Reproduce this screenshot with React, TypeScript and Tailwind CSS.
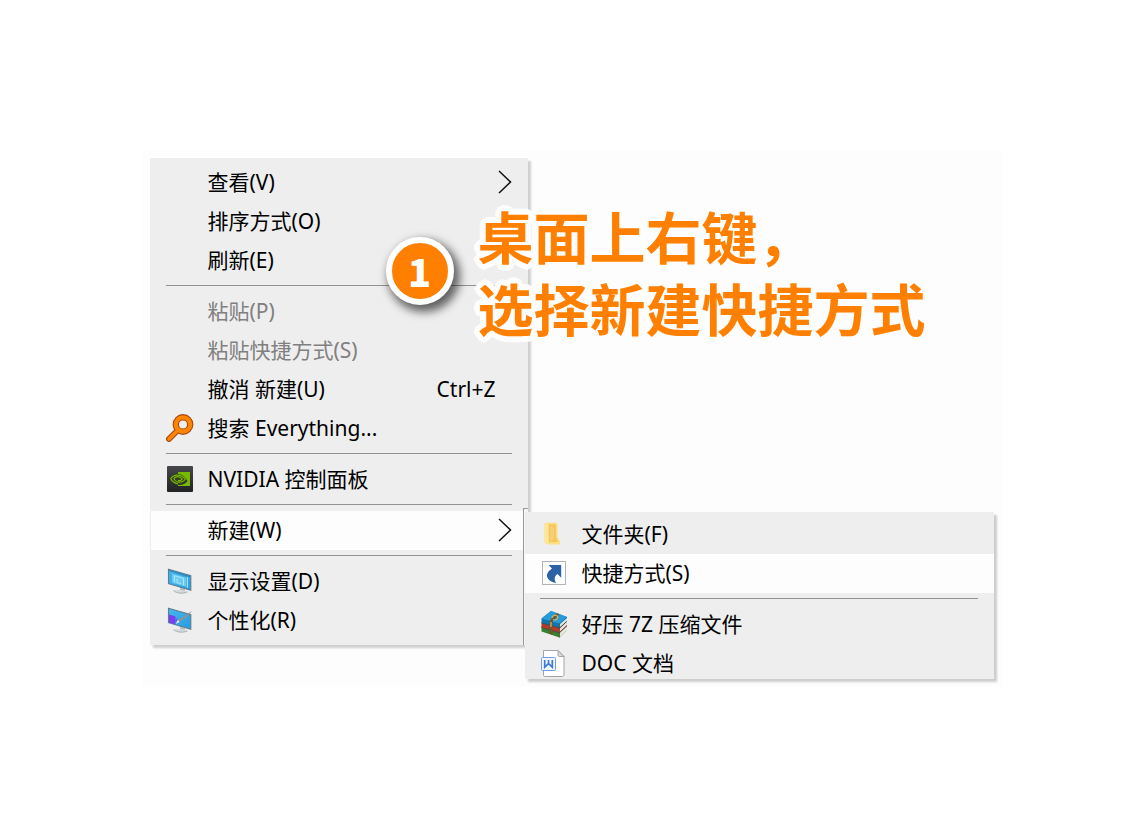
import type { ReactNode } from "react";

function SearchIcon() {
  return (
    <svg viewBox="0 0 28 28" className="size-7" aria-hidden="true">
      <path d="M11.5 16.5 3 25" stroke="#a8480c" strokeWidth="6" strokeLinecap="round" />
      <circle cx="17" cy="10.5" r="7.2" fill="none" stroke="#a8480c" strokeWidth="6.4" />
      <path d="M12.5 15.5 3 25" stroke="#ff8400" strokeWidth="3.6" strokeLinecap="round" />
      <circle cx="17" cy="10.5" r="7.2" fill="none" stroke="#ff8400" strokeWidth="4.2" />
    </svg>
  );
}

function NvidiaIcon() {
  return (
    <svg viewBox="0 0 28 28" className="size-7" aria-hidden="true">
      <defs>
        <linearGradient id="nvBase" x1="0" y1="0" x2="0" y2="1">
          <stop offset="0" stopColor="#45474a" />
          <stop offset="1" stopColor="#202224" />
        </linearGradient>
      </defs>
      <rect x="1" y="1" width="26" height="26" rx="1" fill="url(#nvBase)" />
      <path d="M12 7h12v14H12z" fill="#77b900" />
      <path d="M12 9C8 9 5 11 3.600 13.500 5 17 8 19.500 12 20c5 .5 8-2 9.500-4C19 12 16 9 12 9Z" fill="#333b22" />
      <path d="M12 10.200C8.500 10 6 11.800 4.800 13.500 6 16.500 8.500 18.300 12 18.800M12 10.200c3.500 0 6 2.500 7.300 4.300-2 2.500-4.500 3-7.300 2.500-2.300-.5-3.600-1.700-4.200-3.400 1-1.200 2.500-2 4.200-2 2 0 3.500 1.400 4.300 2.600-1.100 1.200-2.500 1.700-4.300 1.200" fill="none" stroke="#77b900" strokeWidth="1.200" />
    </svg>
  );
}

function Monitor({ pen = false }: { pen?: boolean }) {
  return (
    <svg viewBox="0 0 28 28" className="size-7" aria-hidden="true">
      <defs>
        <linearGradient id="screenFill" x1="0" y1="0" x2="1" y2="1">
          <stop offset="0" stopColor="#45b8ee" />
          <stop offset="1" stopColor="#289be0" />
        </linearGradient>
      </defs>
      <path d="m14 20 5 2v3l-5-1z" fill="#b9c0c4" />
      <path d="M7.500 23.500c3-1 11-.3 14 1.200-2 1.600-6 1.900-8.500 1.400Z" fill="#d5dadd" />
      <path d="M7.500 23.700c1.500 1.300 4 2.200 6.500 2.400s5-.1 7.500-1.200" fill="none" stroke="#a3aaaf" strokeWidth=".9" />
      <path d="M2.500 2.200 24.800 8.700v14.600L2.500 16.700Z" fill="url(#screenFill)" stroke="#5f7d8c" strokeWidth="1.100" />
      {pen ? (
        <>
          <path d="M3 8.500 9 10.200v8L3 16.400Z" fill="#7c3cf0" />
          <path d="m9 10.200 3.500 4.300L9 18.200Z" fill="#4b75ee" />
          <path d="m11 14.500 9.500-6L26 5l-4.500 5.200L12 17Z" fill="#8c9499" />
          <path d="m9.500 18 2.500-4 1.500 2Z" fill="#e9eef0" />
        </>
      ) : (
        <>
          <path d="m6 6.500 14.500 4.200v9.300L6 15.700Z" fill="#7bd5f5" opacity=".75" />
          <path d="M3 3.500 24 9.600" stroke="#2e86b8" strokeWidth="1.200" />
          <path d="M21.500 10v10.800M8.500 8.700v6.500M8.500 8.700l9 2.600v7M11 11.500v4l4 1.200" fill="none" stroke="#b2eafb" strokeWidth=".9" />
        </>
      )}
    </svg>
  );
}

function FolderIcon() {
  return (
    <svg viewBox="0 0 28 28" className="size-7" aria-hidden="true">
      <path d="M4.500 3 15 2.500l2.500 1v13.500l3 5-1 2.500H7.500l-3-2Z" fill="#fbdf85" />
      <path d="M8.500 4.500h7.300V17l2 5H8.500Z" fill="#f5c45b" />
      <path d="m10 6 4 1.500v12L10 22Z" fill="#f8cf78" />
      <path d="M4.500 3 8.500 5v19.500l-4-2Z" fill="#fee69a" />
    </svg>
  );
}

function ShortcutIcon() {
  return (
    <svg viewBox="0 0 28 28" className="size-7" aria-hidden="true">
      <rect x="2.500" y="2.500" width="23" height="23" fill="#fff" stroke="#b1b3b5" />
      <path d="M8.500 6h12.700v12.700l-3.700-3.700c-3 2.200-3.600 5-1.400 9C10 22.800 6.700 19.700 7 16c.2-2.500 2.200-4.500 5-6.500Z" fill="#2b62a5" />
    </svg>
  );
}

function ArchiveIcon() {
  return (
    <svg viewBox="0 0 28 28" className="size-7" aria-hidden="true">
      <path d="m1.500 16 6-4 19.500 4v4.500L19.500 27.500 1.500 21.500Z" fill="#37802d" />
      <path d="m19.500 22.500 7.500-7v5l-7.500 7Z" fill="#e5e7df" />
      <path d="m1.500 12.500 6-4 19.500 3v4.500l-7.500 7-18-5.500Z" fill="#b7392f" />
      <path d="m19.500 18.500 7.500-7v3.500l-7.500 7Z" fill="#e7e2d7" />
      <path d="M1.500 8.500 11 1l16 6v4l-7.500 7-18-5Z" fill="#1474ad" />
      <path d="M1.500 8.500 11 1l16 6-7.500 6.500Z" fill="#279bd8" />
      <path d="m19.500 14.500 7.500-6.500v3l-7.500 6.500Z" fill="#dce4e5" />
      <path d="m1.500 13 18 5M1.500 17.500l18 5.300M19.500 13.500v14M19.500 18.200l7.500-7M19.500 22.700l7.500-7" fill="none" stroke="#364c3a" strokeWidth=".7" />
      <path d="m16.500 3 3 1.200-7 7.500v13l-3-1V11Z" fill="#6d552f" />
      <path d="M12 8c0-2.500 4.500-4 5.500-1.500s-3 4.500-4.500 3M11 12v5" fill="none" stroke="#cab36b" strokeWidth="1.300" />
    </svg>
  );
}

function DocIcon() {
  return (
    <svg viewBox="0 0 28 28" className="size-7" aria-hidden="true">
      <path d="M3.500 1.500H18l6 6V26c0 .8-.6 1.500-1.500 1.500H5c-.9 0-1.500-.5-1.500-1.500Z" fill="#fff" stroke="#a2a4a8" />
      <path d="M18 1.500v4.700c0 .8.500 1.300 1.300 1.300H24Z" fill="#d5d8dc" stroke="#a2a4a8" />
      <rect x="1.500" y="8.500" width="14" height="13" rx="1" fill="#f2f7ff" stroke="#6f9fe8" />
      <path d="M4.700 11v7.300l3.800-3.800 3.800 3.800V11M8.500 11v3.500" fill="none" stroke="#3f78d2" strokeWidth="1.700" />
    </svg>
  );
}

function Chevron() {
  return (
    <svg viewBox="0 0 14 24" className="h-6 w-3.5" aria-hidden="true">
      <path d="m1 1 11.500 11L1 23" fill="none" stroke="#111" strokeWidth="1.500" />
    </svg>
  );
}

type ItemProps = {
  label: string;
  icon?: ReactNode;
  shortcut?: string;
  arrow?: boolean;
  active?: boolean;
  disabled?: boolean;
};

function Item({ label, icon, shortcut, arrow, active, disabled }: ItemProps) {
  return (
    <button
      type="button"
      role="menuitem"
      disabled={disabled}
      aria-haspopup={arrow ? "menu" : undefined}
      className={`flex h-[39px] w-full items-center gap-3.5 pr-4 pb-0.5 pl-[15px] text-left text-[21px] leading-7 whitespace-nowrap text-black disabled:text-[#808080] ${active ? "bg-[#fdfdfd]" : ""}`}
    >
      <span className="size-7 shrink-0">{icon}</span>
      <span className="grow">{label}</span>
      {shortcut && <span className="pr-4">{shortcut}</span>}
      {arrow && <Chevron />}
    </button>
  );
}

function Separator() {
  return (
    <div role="separator" className="flex h-3 items-start pt-[5px] pr-4 pl-[15px]">
      <div className="h-px w-full bg-[#929292]" />
    </div>
  );
}

function NewSubmenu() {
  return (
    <div
      role="menu"
      aria-label="新建"
      className="absolute top-px left-[374px] w-[469px] overflow-hidden bg-[#eeeeee] pt-[3px] shadow-[3px_3px_2px_#cdcdcd]"
    >
      <div className="-mb-1">
        <Item label="文件夹(F)" icon={<FolderIcon />} />
        <Item label="快捷方式(S)" icon={<ShortcutIcon />} active />
        <Separator />
        <Item label="好压 7Z 压缩文件" icon={<ArchiveIcon />} />
        <Item label="DOC 文档" icon={<DocIcon />} />
      </div>
    </div>
  );
}

export default function App() {
  return (
    <main className="flex min-h-screen items-center justify-center bg-white font-['Noto_Sans','Noto_Sans_CJK_SC',sans-serif]">
      <section className="relative w-full max-w-[861px] bg-[#fdfdfd] pt-2 pb-[42px] pl-2">
        <div
          role="menu"
          aria-label="桌面"
          className="w-[378px] bg-[#eeeeee] py-[5px] pl-px shadow-[3px_3px_2px_#cfcfcf]"
        >
          <Item label="查看(V)" arrow />
          <Item label="排序方式(O)" />
          <Item label="刷新(E)" />
          <Separator />
          <Item label="粘贴(P)" disabled />
          <Item label="粘贴快捷方式(S)" disabled />
          <Item label="撤消 新建(U)" shortcut="Ctrl+Z" />
          <Item label="搜索 Everything..." icon={<SearchIcon />} />
          <Separator />
          <Item label="NVIDIA 控制面板" icon={<NvidiaIcon />} />
          <Separator />
          <div className="relative">
            <Item label="新建(W)" arrow active />
            <div className="absolute -top-[3px] left-[372px] h-[137px] w-[5px] border-t border-l border-[#999999] bg-[#f5f5f5]" />
            <NewSubmenu />
          </div>
          <Separator />
          <Item label="显示设置(D)" icon={<Monitor />} />
          <Item label="个性化(R)" icon={<Monitor pen />} />
        </div>

        <div className="absolute top-[87px] left-[244px] flex size-[68px] items-center justify-center rounded-full border-[6px] border-white bg-[#ff8000] font-['Noto_Sans_CJK_SC',sans-serif] text-[38px] leading-none font-black text-white shadow-[4px_5px_10px_2px_rgba(0,0,0,0.6)]">
          1
        </div>
        <h1 className="absolute top-[49px] left-[336px] font-['Noto_Sans_CJK_SC',sans-serif] text-[56px] leading-[72px] font-bold whitespace-nowrap text-[#ff8000] [text-shadow:6px_0_#fdfdfd,-6px_0_#fdfdfd,0_6px_#fdfdfd,0_-6px_#fdfdfd,4px_4px_#fdfdfd,-4px_4px_#fdfdfd,4px_-4px_#fdfdfd,-4px_-4px_#fdfdfd,5px_2px_#fdfdfd,-5px_2px_#fdfdfd,5px_-2px_#fdfdfd,-5px_-2px_#fdfdfd,2px_5px_#fdfdfd,-2px_5px_#fdfdfd,2px_-5px_#fdfdfd,-2px_-5px_#fdfdfd,3px_0_#fdfdfd,-3px_0_#fdfdfd,0_3px_#fdfdfd,0_-3px_#fdfdfd]">
          桌面上右键，
          <br />
          选择新建快捷方式
        </h1>
      </section>
    </main>
  );
}
